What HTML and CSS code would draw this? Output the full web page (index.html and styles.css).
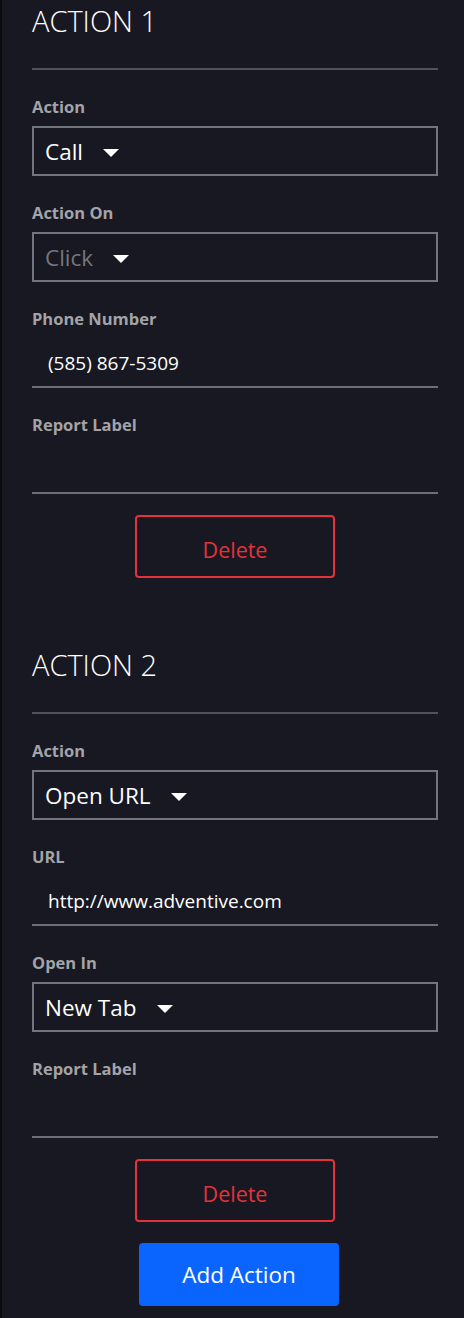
FILE: index.html
```html
<!DOCTYPE html>
<html>
  <head>
    <meta charset="utf-8" />
    <title>Actions</title>
    <link rel="stylesheet" href="styles.css">
  </head>

  <body>
    <div class="panel">
      <!-- Action 1 -->
      <section class="action">
        <h2 class="action-title">ACTION 1</h2>

        <div class="field">
          <div class="field-label">Action</div>
          <div class="select">
            <span class="select-value">Call</span>
            <svg class="caret" width="16" height="8" viewBox="0 0 16 8"><path d="M0 0 H16 L8 8 Z" fill="#fff"/></svg>
          </div>
        </div>

        <div class="field">
          <div class="field-label">Action On</div>
          <div class="select">
            <span class="select-value muted">Click</span>
            <svg class="caret" width="16" height="8" viewBox="0 0 16 8"><path d="M0 0 H16 L8 8 Z" fill="#fff"/></svg>
          </div>
        </div>

        <div class="field">
          <div class="field-label">Phone Number</div>
          <div class="input">(585) 867-5309</div>
        </div>

        <div class="field">
          <div class="field-label">Report Label</div>
          <div class="input"></div>
        </div>

        <div class="btn-row">
          <button class="btn-delete">Delete</button>
        </div>
      </section>

      <!-- Action 2 -->
      <section class="action">
        <h2 class="action-title">ACTION 2</h2>

        <div class="field">
          <div class="field-label">Action</div>
          <div class="select">
            <span class="select-value">Open URL</span>
            <svg class="caret" width="16" height="8" viewBox="0 0 16 8"><path d="M0 0 H16 L8 8 Z" fill="#fff"/></svg>
          </div>
        </div>

        <div class="field">
          <div class="field-label">URL</div>
          <div class="input">http://www.adventive.com</div>
        </div>

        <div class="field">
          <div class="field-label">Open In</div>
          <div class="select">
            <span class="select-value">New Tab</span>
            <svg class="caret" width="16" height="8" viewBox="0 0 16 8"><path d="M0 0 H16 L8 8 Z" fill="#fff"/></svg>
          </div>
        </div>

        <div class="field">
          <div class="field-label">Report Label</div>
          <div class="input"></div>
        </div>

        <div class="btn-row">
          <button class="btn-delete">Delete</button>
        </div>
      </section>

      <div class="btn-row add-row">
        <button class="btn-add">Add Action</button>
      </div>
    </div>
  </body>
</html>
```

FILE: styles.css
```css
* {
  box-sizing: border-box;
}
body {
  margin: 0;
  background-color: #171821;
  font-family: "Open Sans", "Noto Sans", sans-serif;
  color: #fff;
}

.panel {
  min-height: 1318px;
  border-left: 2px solid #0b0c0f;
  padding: 0 26px 0 30px;
}

/* セクション */
.action + .action {
  margin-top: 66px;
}
.action-title {
  margin: 0;
  font-size: 29px;
  font-weight: 300;
  line-height: 42px;
  padding-bottom: 26px;
  border-bottom: 2px solid #4f515d;
}

/* フィールド */
.field {
  margin-top: 24px;
}
.field-label {
  font-size: 16.5px;
  font-weight: bold;
  line-height: 26px;
  color: #a3a3a8;
  margin-bottom: 6px;
}

.select {
  height: 50px;
  border: 2px solid #72747e;
  padding: 1px 11px 0;
  display: flex;
  align-items: center;
  gap: 20px;
}
.select-value {
  font-size: 22.5px;
}
.select-value.muted {
  color: #75767c;
}
.caret {
  display: block;
  margin-top: 2px;
}

.input {
  height: 50px;
  border-bottom: 2px solid #6b6d78;
  padding: 2px 16px 0;
  display: flex;
  align-items: center;
  font-size: 19px;
}

/* ボタン */
.btn-row {
  display: flex;
  justify-content: center;
}
.btn-delete {
  margin-top: 21px;
  width: 200px;
  height: 63px;
  background: transparent;
  border: 2px solid #e5323a;
  border-radius: 4px;
  color: #e5323a;
  font-family: inherit;
  font-size: 21.5px;
  padding-top: 6px;
}
.add-row {
  padding-left: 8px;
}
.btn-add {
  margin-top: 21px;
  width: 200px;
  height: 63px;
  background-color: #0a65ff;
  border: none;
  border-radius: 4px;
  color: #fff;
  font-family: inherit;
  font-size: 22.5px;
}
```
